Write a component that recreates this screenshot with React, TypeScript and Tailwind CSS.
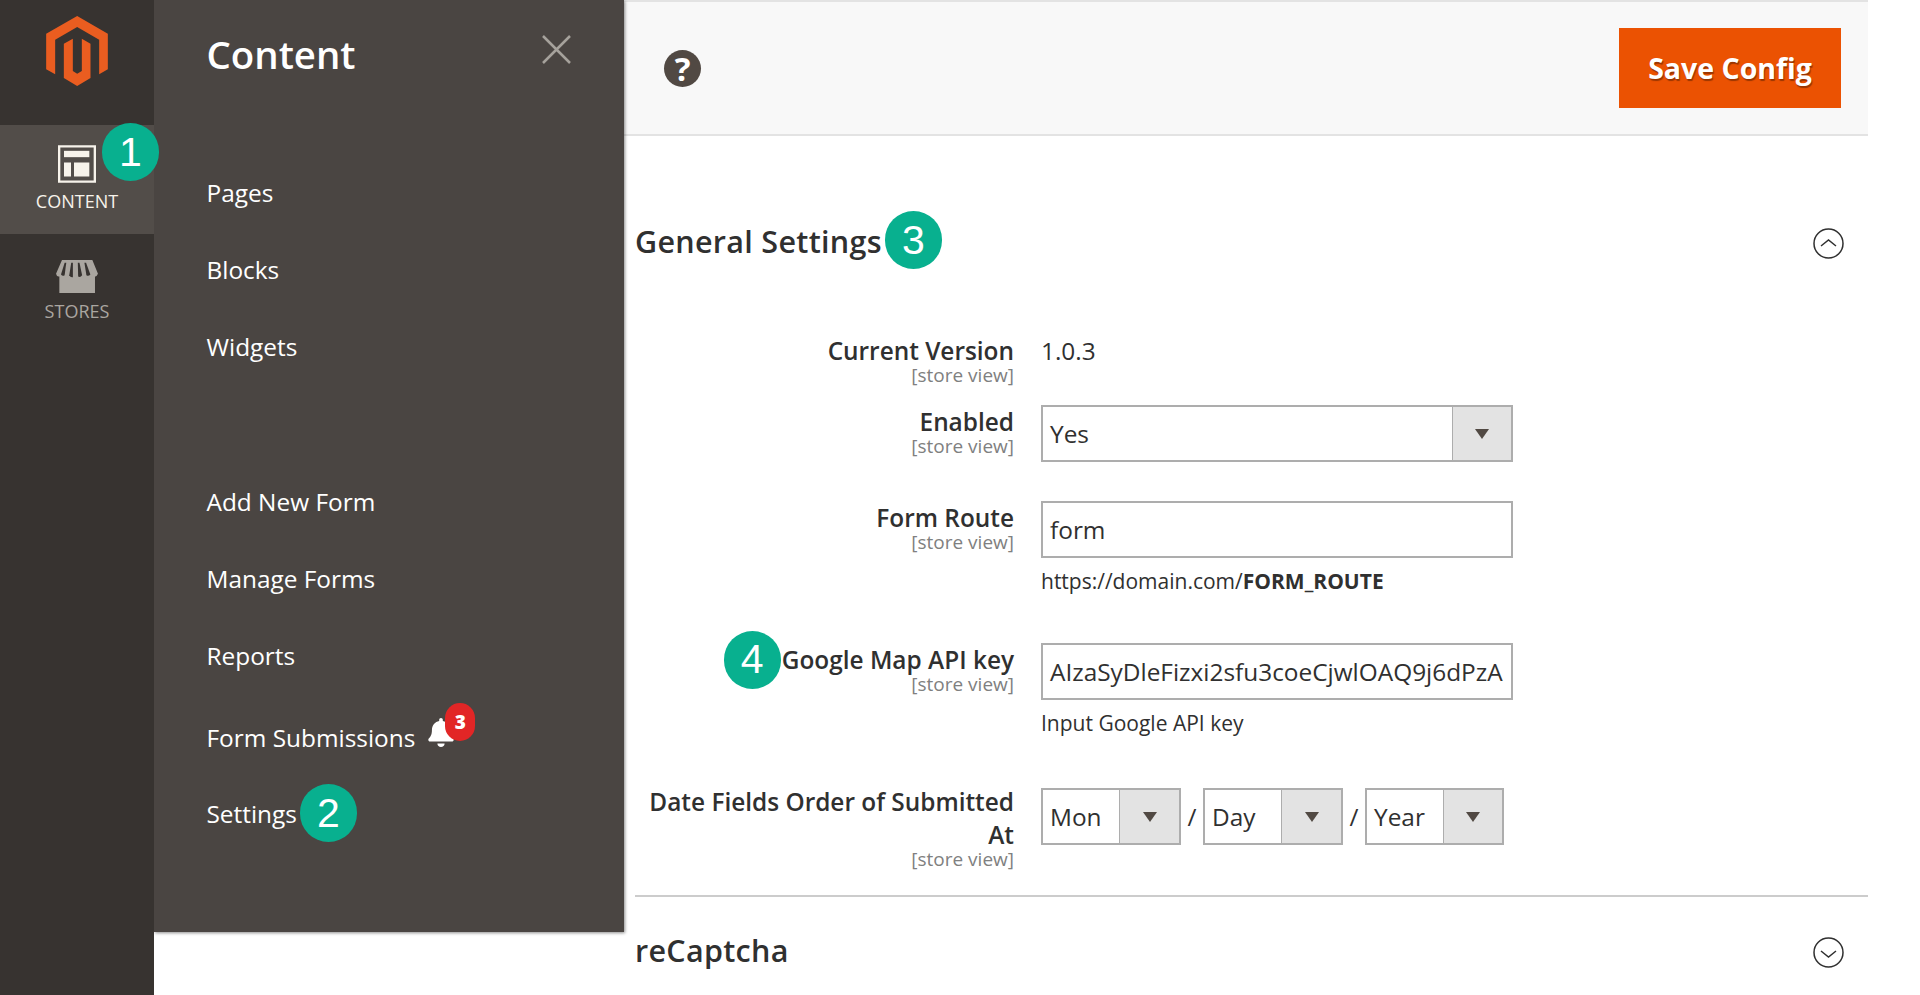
import { FaBell } from "react-icons/fa";

function Badge({ n }: { n: number }) {
  return (
    <span className="flex h-[58px] w-[57px] shrink-0 items-center justify-center rounded-full bg-[#08b08f] font-['Liberation_Sans',sans-serif] text-[41px] font-normal leading-none text-white">
      {n}
    </span>
  );
}

function Logo() {
  return (
    <svg viewBox="138 47 185 210" width={62} height={70} fill="#ea5d20">
      <path d="M231 47 L323 100 V207 L297 222 V118 L231 80 L165 118 V222 L138 207 V100 Z" />
      <path d="M191 130 L218 115 V212 L231 220 L245 212 V115 L271 130 V233 L231 257 L191 233 Z" />
    </svg>
  );
}

function ContentIcon() {
  return (
    <svg viewBox="174 436 114 113" width={38} height={38} fill="#f7f3eb">
      <path fillRule="evenodd" d="M174 436 H288 V549 H174 Z M181 443 V542 H281 V443 Z" />
      <rect x="192" y="453" width="76" height="19" />
      <rect x="192" y="488" width="21" height="42" />
      <rect x="222" y="488" width="46" height="42" />
    </svg>
  );
}

function StoreIcon() {
  return (
    <svg viewBox="168 780 127 100" width={42} height={33}>
      <path fill="#aaa6a0" d="M186 780 H278 L295 822 Q290 832 286 830 V880 H178 V830 Q170 832 168 822 Z" />
      <g fill="#373330">
        <path d="M194 788 H199 L194 826 Q188 830 183 824 Z" />
        <path d="M214 788 H219 L219 832 Q212 834 208 826 Z" />
        <path d="M234 788 H239 L247 826 Q242 834 235 830 Z" />
        <path d="M254 788 H259 L272 824 Q266 830 260 826 Z" />
      </g>
    </svg>
  );
}

function Chevron({ up }: { up?: boolean }) {
  return (
    <svg width={31} height={31} viewBox="0 0 31 31" fill="none" stroke="#303030" strokeWidth={1.5}>
      <circle cx="15.5" cy="15.5" r="14.5" />
      <polyline points={up ? "8,18 15.5,12 23,18" : "8,14 15.5,20 23,14"} />
    </svg>
  );
}

function Label({ title, badge }: { title: React.ReactNode; badge?: number }) {
  return (
    <div className="w-[378px] shrink-0 text-right">
      <div className="flex items-center justify-end text-[24.4px] font-semibold leading-[33px] text-[#303030]">
        {badge && <span className="mr-[1px] -my-[13px]"><Badge n={badge} /></span>}
        <span>{title}</span>
      </div>
      <div className="-mt-[1px] text-[19px] leading-[18px] text-[#808080]">[store view]</div>
    </div>
  );
}

function Select({ value, width, arrowWidth }: { value: string; width: string; arrowWidth: string }) {
  return (
    <div className={`flex h-[57px] items-stretch border-2 border-[#adadad] bg-white ${width}`}>
      <div className="flex-1 pl-[7px] text-[24.4px] leading-[53px] text-[#303030]">{value}</div>
      <div className={`flex items-center justify-center border-l border-[#adadad] bg-[#e3e3e3] ${arrowWidth}`}>
        <span className="h-0 w-0 border-x-[7px] border-t-[10px] border-x-transparent border-t-[#514943]" />
      </div>
    </div>
  );
}

function TextInput({ value }: { value: string }) {
  return (
    <div className="h-[57px] w-[472px] overflow-hidden whitespace-nowrap border-2 border-[#adadad] bg-white pl-[7px] text-[24.4px] leading-[53px] text-[#303030]">
      {value}
    </div>
  );
}

export default function App() {
  return (
    <div className="relative flex h-[995px] overflow-hidden bg-white font-['Open_Sans',sans-serif]">
      <aside className="relative z-20 flex w-[154px] shrink-0 flex-col items-center bg-[#373330]">
        <div className="flex h-[125px] w-full justify-center pt-[16px]">
          <Logo />
        </div>
        <div className="relative flex h-[109px] w-full flex-col items-center bg-[#524d49] pt-[20px]">
          <ContentIcon />
          <div className="mt-[7px] text-[18px] font-medium leading-[22px] text-[#f7f3eb]">CONTENT</div>
          <div className="absolute left-[102px] top-[-2px]">
            <Badge n={1} />
          </div>
        </div>
        <div className="flex flex-col items-center pt-[26px]">
          <StoreIcon />
          <div className="mt-[7px] text-[18px] font-medium leading-[22px] text-[#aaa6a0]">STORES</div>
        </div>
      </aside>

      <div className="absolute left-[154px] top-0 z-10 h-[932px] w-[470px] bg-[#4a4542] pl-[52.5px] shadow-[1px_1px_3px_rgba(0,0,0,0.45)]">
        <div className="mt-[24px] flex items-start justify-between pr-[53px]">
          <h2 className="text-[38.4px] font-semibold leading-[60px] text-white">Content</h2>
          <svg width={29} height={29} viewBox="0 0 29 29" stroke="#a6a29c" strokeWidth={2.5} className="mt-[11px]">
            <path d="M1 1 L28 28 M28 1 L1 28" />
          </svg>
        </div>
        <ul className="mt-[89px] text-[24.4px] font-medium leading-[40px] text-white">
          <li>Pages</li>
          <li className="mt-[37px]">Blocks</li>
          <li className="mt-[37px]">Widgets</li>
          <li className="mt-[115px]">Add New Form</li>
          <li className="mt-[37px]">Manage Forms</li>
          <li className="mt-[37px]">Reports</li>
          <li className="mt-[42px] flex items-start">
            <span>Form Submissions</span>
            <span className="relative ml-[13px]">
              <FaBell className="h-[29px] w-[26px] text-white" />
              <span className="absolute left-[17px] top-[-15px] flex h-[38px] w-[30px] items-center justify-center rounded-full bg-[#e22626] text-[19px] font-extrabold leading-none text-white">
                3
              </span>
            </span>
          </li>
          <li className="mt-[36px] flex h-[40px] items-center">
            <span>Settings</span>
            <span className="-mt-[2px] ml-[3px]">
              <Badge n={2} />
            </span>
          </li>
        </ul>
      </div>

      <main className="flex-1 pr-[52px]">
        <header className="flex h-[136px] items-center justify-between border-y-2 border-[#e3e3e3] bg-[#f8f8f8] pl-[510px] pr-[27px]">
          <span className="flex h-[37px] w-[37px] items-center justify-center rounded-full bg-[#514943] text-[33px] font-bold leading-none text-white">
            ?
          </span>
          <button className="h-[80px] w-[222px] bg-[#eb5202] text-[28.5px] font-bold text-white [text-shadow:1px_2px_1px_rgba(0,0,0,0.35)]">
            Save Config
          </button>
        </header>

        <section className="pl-[481px]">
          <div className="mt-[75px] flex h-[58px] items-center justify-between pr-[24px]">
            <div className="flex items-center">
              <h3 className="pt-[2px] text-[30.5px] font-semibold leading-[58px] tracking-[0.3px] text-[#303030]">General Settings</h3>
              <span className="ml-[3px]">
                <Badge n={3} />
              </span>
            </div>
            <span className="mt-[6px]">
              <Chevron up />
            </span>
          </div>

          <div className="mt-[65px] flex gap-[27px] pl-[1px]">
            <Label title="Current Version" />
            <div className="text-[24.4px] leading-[33px] text-[#303030]">1.0.3</div>
          </div>

          <div className="mt-[21px] flex gap-[27px] pl-[1px]">
            <Label title="Enabled" />
            <Select value="Yes" width="w-[472px]" arrowWidth="w-[59px]" />
          </div>

          <div className="mt-[39px] flex gap-[27px] pl-[1px]">
            <Label title="Form Route" />
            <div>
              <TextInput value="form" />
              <div className="mt-[8px] text-[21px] leading-[30px] text-[#303030]">
                https://domain.com/<b className="font-bold">FORM_ROUTE</b>
              </div>
            </div>
          </div>

          <div className="mt-[47px] flex gap-[27px] pl-[1px]">
            <Label title="Google Map API key" badge={4} />
            <div>
              <TextInput value="AIzaSyDleFizxi2sfu3coeCjwlOAQ9j6dPzA" />
              <div className="mt-[8px] text-[21px] leading-[30px] text-[#303030]">Input Google API key</div>
            </div>
          </div>

          <div className="mt-[47px] flex gap-[27px] pl-[1px]">
            <Label title="Date Fields Order of Submitted At" />
            <div className="mt-[3px] flex items-start text-[24.4px] text-[#303030]">
              <Select value="Mon" width="w-[140px]" arrowWidth="w-[60px]" />
              <span className="w-[22px] text-center leading-[57px]">/</span>
              <Select value="Day" width="w-[140px]" arrowWidth="w-[60px]" />
              <span className="w-[22px] text-center leading-[57px]">/</span>
              <Select value="Year" width="w-[139px]" arrowWidth="w-[59px]" />
            </div>
          </div>

          <div className="mt-[27px] h-[2px] bg-[#cccccc]" />

          <div className="mt-[24px] flex h-[58px] items-center justify-between pr-[24px]">
            <h3 className="text-[30.5px] font-semibold leading-[58px] tracking-[0.3px] text-[#303030]">reCaptcha</h3>
            <span className="mt-[5px]">
              <Chevron />
            </span>
          </div>
        </section>
      </main>
    </div>
  );
}
